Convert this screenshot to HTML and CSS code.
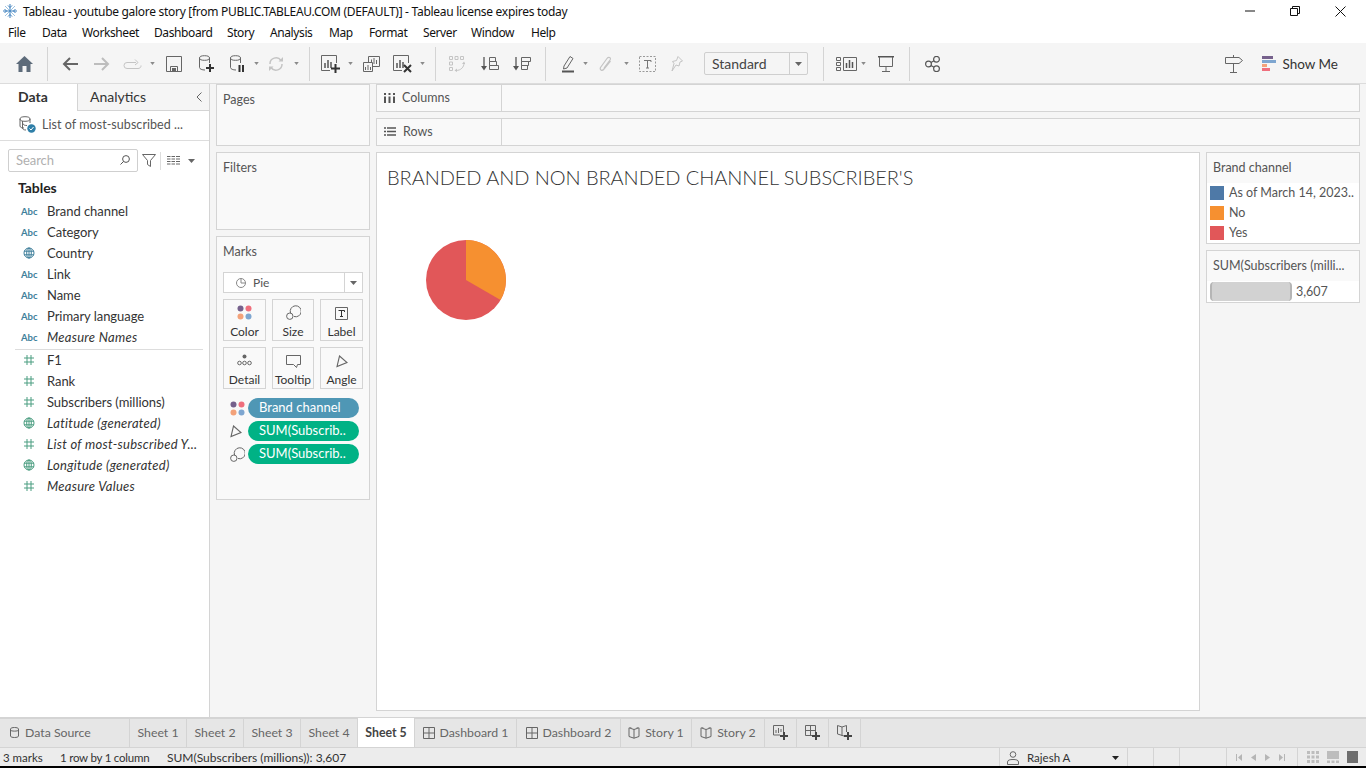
FILE: index.html
```html
<!DOCTYPE html>
<html lang="en">

<head>
    <meta charset="UTF-8">
    <title>Tableau - youtube galore story</title>
    <link rel="stylesheet" href="styles.css">
</head>

<body>
    <svg class="defs" width="0" height="0">
        <symbol id="caret" viewBox="0 0 6 4"><path d="M0 0H6L3 4Z" fill="#8a8a8a"/></symbol>
        <symbol id="caret-mid" viewBox="0 0 7 4"><path d="M0 0H7L3.5 4Z" fill="#666"/></symbol>
        <symbol id="caret-dark" viewBox="0 0 7 4"><path d="M0 0H7L3.5 4Z" fill="#222"/></symbol>
        <symbol id="globe" viewBox="0 0 12 12"><g fill="none" stroke-width="1"><circle cx="6" cy="6" r="5"/><ellipse cx="6" cy="6" rx="2.3" ry="5"/><path d="M1 4.2H11M1 7.8H11M6 1V11"/></g></symbol>
        <symbol id="hash" viewBox="0 0 10 10"><path d="M3 0V10M7 0V10M0 3H10M0 7H10" stroke="#4a9d80" stroke-width="1" fill="none"/></symbol>
        <symbol id="dots" viewBox="0 0 15 15"><circle cx="3.5" cy="3.5" r="3" fill="#76618c"/><circle cx="11.5" cy="3.5" r="3" fill="#ef6f7d"/><circle cx="3.5" cy="11.5" r="3" fill="#f3a27a"/><circle cx="11.5" cy="11.5" r="3" fill="#7ea6d0"/></symbol>
        <symbol id="size" viewBox="0 0 15 15"><g fill="none" stroke="#666" stroke-width="1"><path d="M4.5 8A5.5 5.5 0 1 1 8 11.5"/><circle cx="3.8" cy="11.2" r="3.2"/></g></symbol>
        <symbol id="angle" viewBox="0 0 12 13"><path d="M3.5 1L11 7.5L1 11.5Z" fill="none" stroke="#666" stroke-width="1.1"/></symbol>
        <symbol id="grid-sq" viewBox="0 0 12 12"><path d="M.5.5H11.5V11.5H.5ZM6 .5V11.5M.5 6H11.5" fill="none" stroke="#666"/></symbol>
        <symbol id="book" viewBox="0 0 12 12"><path d="M6 2.5L1 .8V9.5L6 11.2L11 9.5V.8ZM6 2.5V11.2M2.8.8V0M9.2.8V0" fill="none" stroke="#666"/></symbol>
    </svg>

    <div class="app">
        <div class="titlebar">
            <svg class="logo" width="14" height="14" viewBox="0 0 14 14">
                <g stroke-width="1" fill="none">
                    <path d="M2 2L12 12M12 2L2 12" stroke="#9cc3e2"/>
                    <path d="M7 0V14M0 7H14" stroke="#3a7ebd"/>
                    <path d="M5 1.5L7 3.500L9 1.500M5 12.500L7 10.500L9 12.500M1.500 5L3.500 7L1.500 9M12.500 5L10.500 7L12.500 9" stroke="#3a7ebd"/>
                </g>
            </svg>
            <span class="title-text">Tableau - youtube galore story [from PUBLIC.TABLEAU.COM (DEFAULT)] - Tableau license expires today</span>
            <div class="win-controls">
                <svg width="10" height="10" viewBox="0 0 10 10"><path d="M0 5H10" stroke="#111"/></svg>
                <svg width="10" height="10" viewBox="0 0 10 10"><path d="M.5 2.5H7.5V9.5H.5ZM2.5 2.5V.5H9.5V7.5H7.5" fill="none" stroke="#111"/></svg>
                <svg width="11" height="11" viewBox="0 0 11 11"><path d="M.5.5L10.5 10.5M10.5.5L.5 10.5" stroke="#111"/></svg>
            </div>
        </div>

        <div class="menubar">
            <span>File</span><span>Data</span><span>Worksheet</span><span>Dashboard</span><span>Story</span><span>Analysis</span><span>Map</span><span>Format</span><span>Server</span><span>Window</span><span>Help</span>
        </div>

        <div class="toolbar">
            <div class="tools">
                <svg width="17" height="16" viewBox="0 0 17 16"><path d="M8.5 0L17 8H14.5V16H10.5V10H6.5V16H2.5V8H0Z" fill="#5d6b7a"/></svg>
                <div class="sep"></div>
                <svg width="16" height="14" viewBox="0 0 16 14"><path d="M16 7H2M8 1L2 7L8 13" fill="none" stroke="#666" stroke-width="2"/></svg>
                <svg width="16" height="14" viewBox="0 0 16 14"><path d="M0 7H14M8 1L14 7L8 13" fill="none" stroke="#bdbdbd" stroke-width="2"/></svg>
                <svg width="19" height="10" viewBox="0 0 19 10"><path d="M13 3.5H4A2.8 2.8 0 0 0 4 9.5H15A2.8 2.8 0 0 0 18 6.5M12 .5L15 3.5L12 6" fill="none" stroke="#c4c4c4"/></svg>
                <svg class="dd" width="5" height="3"><use href="#caret"/></svg>
                <svg width="16" height="16" viewBox="0 0 16 16"><path d="M.5.5H15.5V15.5H.5ZM4.5 15.5V10.5H11.5V15.5" fill="none" stroke="#666"/><path d="M6 12H10V15H6Z" fill="#666"/></svg>
                <svg width="15" height="18" viewBox="0 0 15 18"><g fill="none" stroke="#666"><ellipse cx="5.5" cy="3" rx="5" ry="2.3"/><path d="M.5 3V12.5C.5 14 3 15 6 15M10.500 3V8"/></g><path d="M11 9V17M7 13H15" stroke="#333" stroke-width="2"/></svg>
                <svg width="15" height="18" viewBox="0 0 15 18"><g fill="none" stroke="#666"><ellipse cx="5.500" cy="3" rx="5" ry="2.3"/><path d="M.5 3V12.500C.5 14 3 15 6 15M10.500 3V8"/></g><path d="M9.500 10V17M13 10V17" stroke="#333" stroke-width="2"/></svg>
                <svg class="dd" width="5" height="3"><use href="#caret"/></svg>
                <svg width="16" height="16" viewBox="0 0 16 16"><g fill="none" stroke="#c4c4c4" stroke-width="1.5"><path d="M2 8A6 6 0 0 1 13 4.500M14 8A6 6 0 0 1 3 11.500"/></g><path d="M10.500 5.500H15V1ZM5.500 10.500H1V15Z" fill="#c4c4c4"/></svg>
                <svg class="dd" width="5" height="3"><use href="#caret"/></svg>
                <div class="sep"></div>
                <svg width="19" height="18" viewBox="0 0 19 18"><path d="M15.500 8V.5H.5V15.500H9" fill="none" stroke="#666"/><path d="M4 8V13M7 5V13M10 7V13" stroke="#555" stroke-width="1.5"/><path d="M14.500 9V18M10 13.500H19" stroke="#333" stroke-width="2"/></svg>
                <svg class="dd" width="5" height="3"><use href="#caret"/></svg>
                <svg width="17" height="16" viewBox="0 0 17 16"><g fill="none" stroke="#666"><path d="M5.500 7V.5H16.500V10.500H10"/><path d="M.5 6.500H9.500V15.500H.5Z" fill="#f5f5f5"/></g><path d="M8.500 3.500V6M11 2V8M13.500 4V8M2.500 11V14M5 9V14M7.500 11V14" stroke="#666"/></svg>
                <svg width="19" height="18" viewBox="0 0 19 18"><path d="M15.500 8V.5H.5V15.500H9" fill="none" stroke="#666"/><path d="M4 8V13M7 5V13M10 7V13" stroke="#555" stroke-width="1.5"/><path d="M11 10L18 17M18 10L11 17" stroke="#333" stroke-width="2"/></svg>
                <svg class="dd" width="5" height="3"><use href="#caret"/></svg>
                <div class="sep"></div>
                <svg width="16" height="16" viewBox="0 0 16 16"><g fill="none" stroke="#c4c4c4"><path d="M.5.5H3.500V3.500H.5ZM6 .5H9V3.500H6ZM11.500 .5H14.500V3.500H11.500ZM.5 6H3.500V9H.5ZM.5 11.500H3.500V14.500H.5ZM15 7C15 11 12 14.500 7 14.500"/></g><path d="M8 12.500V16L5.500 14.500ZM13 8H16.500L15 5.500Z" fill="#c4c4c4"/></svg>
                <svg width="18" height="14" viewBox="0 0 18 14"><path d="M3 0V12" stroke="#555" stroke-width="1.300"/><path d="M0 9L3 13.500L6 9Z" fill="#555"/><path d="M8.500 .5H14.500V4.500H8.500ZM8.500 4.500H15.500V8.500H8.500ZM8.500 8.500H17.500V12.500H8.500Z" fill="none" stroke="#666"/></svg>
                <svg width="18" height="14" viewBox="0 0 18 14"><path d="M3 0V12" stroke="#555" stroke-width="1.300"/><path d="M0 9L3 13.500L6 9Z" fill="#555"/><path d="M8.500 .5H17.500V4.500H8.500ZM8.500 4.500H15.500V8.500H8.500ZM8.500 8.500H14.500V12.500H8.500Z" fill="none" stroke="#666"/></svg>
                <div class="sep"></div>
                <svg width="12" height="18" viewBox="0 0 12 18"><path d="M2 11L8 1.500L11 3.500L5 13L1.500 14Z" fill="none" stroke="#666"/><path d="M0 16.500H12" stroke="#555" stroke-width="2"/></svg>
                <svg class="dd" width="5" height="3"><use href="#caret"/></svg>
                <svg width="13" height="16" viewBox="0 0 13 16"><path d="M11.500 5L5 13C3 15.500 .5 14 1.500 11.500L8 2.500C9.500 .5 12.500 1.500 11 4L5 12" fill="none" stroke="#c4c4c4" stroke-width="1.200"/></svg>
                <svg class="dd" width="5" height="3"><use href="#caret"/></svg>
                <svg width="17" height="16" viewBox="0 0 17 16"><path d="M.5.5H16.500V15.500H.5Z" fill="none" stroke="#999" stroke-dasharray="2 1.500"/><path d="M5 4.500H12V6M8.500 4.500V12M7 12H10" fill="none" stroke="#777"/></svg>
                <svg width="12" height="16" viewBox="0 0 12 16"><path d="M7 .5L11.500 5L9 6L8 10L5 9L1 15L3 7.500L1.500 5.500L5.500 4.500Z" fill="none" stroke="#c4c4c4"/></svg>
                <div class="style-select"><span>Standard</span><i><svg width="7" height="4"><use href="#caret-mid"/></svg></i></div>
                <div class="sep"></div>
                <svg width="21" height="14" viewBox="0 0 21 14"><g fill="none" stroke="#666"><path d="M.5.5H4.500V3.500H.5ZM.5 5.500H4.500V8.500H.5ZM.5 10.500H4.500V13.500H.5ZM7.500 .5H20.500V13.500H7.500Z"/></g><path d="M10.500 6V11M13.500 3V11M16.500 5V11" stroke="#555" stroke-width="1.500"/></svg>
                <svg class="dd" width="5" height="3"><use href="#caret"/></svg>
                <svg width="16" height="16" viewBox="0 0 16 16"><path d="M0 .75H16" stroke="#555" stroke-width="1.500"/><path d="M1.500 1V10.500H14.500V1M8 10.500V15M4 15.500H12" fill="none" stroke="#666"/></svg>
                <div class="sep"></div>
                <svg width="15" height="16" viewBox="0 0 15 16"><g fill="none" stroke="#555" stroke-width="1.200"><circle cx="3.500" cy="8" r="2.900"/><circle cx="11.500" cy="3.300" r="2.900"/><circle cx="11.500" cy="12.700" r="2.900"/><path d="M6 6.500L9 4.800M6 9.500L9 11.200"/></g></svg>
            </div>
            <div class="tools-right">
                <svg width="18" height="18" viewBox="0 0 18 18"><path d="M.5 2.500H14L17.500 5.500L14 8.500H.5ZM8.500 0V2.500M8.500 8.500V17.500M5 17.500H12" fill="none" stroke="#666"/></svg>
                <div class="show-me">
                    <svg width="14" height="15" viewBox="0 0 14 15"><path d="M0 0H11V3H0Z" fill="#76618c"/><path d="M0 4H14V7H0Z" fill="#7ea6d0"/><path d="M0 8H5V11H0Z" fill="#f3a27a"/><path d="M0 12H8V15H0Z" fill="#ef6f7d"/></svg>
                    <span>Show Me</span>
                </div>
            </div>
        </div>

        <div class="main">
            <div class="sidebar">
                <div class="side-tabs">
                    <div class="side-tab active">Data</div>
                    <div class="side-tab">Analytics
                        <svg class="collapse" width="6" height="10" viewBox="0 0 6 10"><path d="M5.500 .5L1 5L5.500 9.500" fill="none" stroke="#666"/></svg>
                    </div>
                </div>
                <div class="source-row">
                    <svg width="17" height="17" viewBox="0 0 17 17"><g fill="none" stroke="#666"><ellipse cx="6" cy="3" rx="5" ry="2.300"/><path d="M1 3V10C1 11.500 3 12 5 12M11 3V7M4 7.500C4 9 6 9.500 8 9.500M3.500 5V12C3.500 13.500 5 14 7 14"/></g><circle cx="12.500" cy="12.500" r="4.200" fill="#2f7fa8"/><path d="M10.500 12.500L12 14L14.500 11" fill="none" stroke="#fff"/></svg>
                    <span>List of most-subscribed ...</span>
                </div>
                <div class="search-row">
                    <div class="search-box">
                        <span>Search</span>
                        <svg width="10" height="10" viewBox="0 0 10 10"><circle cx="6" cy="4" r="3.400" fill="none" stroke="#555"/><path d="M3.500 6.500L.5 9.500" stroke="#555"/></svg>
                    </div>
                    <svg width="14" height="13" viewBox="0 0 14 13"><path d="M.5.5H13.500L8.500 6.500V12.500L5.500 10.500V6.500Z" fill="none" stroke="#666"/></svg>
                    <div class="search-sep"></div>
                    <svg width="13" height="9" viewBox="0 0 13 9"><path d="M0 .5H13M0 3H13M0 5.500H13M0 8H13" stroke="#666"/><path d="M4 0V9M8.500 0V9" stroke="#fff"/></svg>
                    <svg class="search-caret" width="7" height="4"><use href="#caret-mid"/></svg>
                </div>
                <div class="tables-head">Tables</div>
                <ul class="fields">
                    <li class="field"><span class="abc">Abc</span>Brand channel</li>
                    <li class="field"><span class="abc">Abc</span>Category</li>
                    <li class="field"><span class="f-icon"><svg class="globe-dim" width="12" height="12"><use href="#globe"/></svg></span>Country</li>
                    <li class="field"><span class="abc">Abc</span>Link</li>
                    <li class="field"><span class="abc">Abc</span>Name</li>
                    <li class="field"><span class="abc">Abc</span>Primary language</li>
                    <li class="field gen"><span class="abc">Abc</span>Measure Names</li>
                </ul>
                <ul class="fields measures">
                    <li class="field"><span class="f-icon"><svg width="10" height="10"><use href="#hash"/></svg></span>F1</li>
                    <li class="field"><span class="f-icon"><svg width="10" height="10"><use href="#hash"/></svg></span>Rank</li>
                    <li class="field"><span class="f-icon"><svg width="10" height="10"><use href="#hash"/></svg></span>Subscribers (millions)</li>
                    <li class="field gen"><span class="f-icon"><svg class="globe-mea" width="12" height="12"><use href="#globe"/></svg></span>Latitude (generated)</li>
                    <li class="field gen"><span class="f-icon"><svg width="10" height="10"><use href="#hash"/></svg></span>List of most-subscribed Y...</li>
                    <li class="field gen"><span class="f-icon"><svg class="globe-mea" width="12" height="12"><use href="#globe"/></svg></span>Longitude (generated)</li>
                    <li class="field gen"><span class="f-icon"><svg width="10" height="10"><use href="#hash"/></svg></span>Measure Values</li>
                </ul>
            </div>

            <div class="cards">
                <div class="card pages"><div class="card-title">Pages</div></div>
                <div class="card filters"><div class="card-title">Filters</div></div>
                <div class="card marks">
                    <div class="card-title">Marks</div>
                    <div class="mark-type">
                        <svg width="10" height="10" viewBox="0 0 10 10"><circle cx="5" cy="5" r="4.500" fill="none" stroke="#888"/><path d="M5 1V5H9" fill="none" stroke="#888"/></svg>
                        <span>Pie</span>
                        <i><svg width="7" height="4"><use href="#caret-mid"/></svg></i>
                    </div>
                    <div class="mark-btns">
                        <div class="mark-btn"><svg width="15" height="15"><use href="#dots"/></svg><span>Color</span></div>
                        <div class="mark-btn"><svg width="15" height="15"><use href="#size"/></svg><span>Size</span></div>
                        <div class="mark-btn"><svg width="13" height="13" viewBox="0 0 13 13"><path d="M.5.5H12.500V12.500H.5Z" fill="none" stroke="#666"/><path d="M3.500 3.500H9.500V5M6.500 3.500V9.500M5 9.500H8" fill="none" stroke="#333"/></svg><span>Label</span></div>
                        <div class="mark-btn"><svg width="15" height="15" viewBox="0 0 15 15"><circle cx="7.500" cy="3.500" r="2" fill="#666"/><g fill="none" stroke="#666"><circle cx="2.500" cy="10" r="1.800"/><circle cx="7.500" cy="10" r="1.800"/><circle cx="12.500" cy="10" r="1.800"/></g></svg><span>Detail</span></div>
                        <div class="mark-btn"><svg width="15" height="13" viewBox="0 0 15 13"><path d="M.5.5H14.500V9.500H11.500L10.500 12.500L7.500 9.500H.5Z" fill="none" stroke="#666"/></svg><span>Tooltip</span></div>
                        <div class="mark-btn"><svg width="12" height="13"><use href="#angle"/></svg><span>Angle</span></div>
                    </div>
                    <div class="pill-row">
                        <svg width="15" height="15"><use href="#dots"/></svg>
                        <div class="pill dim">Brand channel</div>
                    </div>
                    <div class="pill-row">
                        <svg width="12" height="13"><use href="#angle"/></svg>
                        <div class="pill mea">SUM(Subscrib..</div>
                    </div>
                    <div class="pill-row">
                        <svg width="15" height="15"><use href="#size"/></svg>
                        <div class="pill mea">SUM(Subscrib..</div>
                    </div>
                </div>
            </div>

            <div class="work">
                <div class="shelf">
                    <div class="shelf-label"><svg width="11" height="10" viewBox="0 0 11 10"><path d="M1 0V2M5.500 0V2M10 0V2M1 3.500V10M5.500 3.500V10M10 3.500V10" stroke="#555" stroke-width="2"/></svg><span>Columns</span></div>
                </div>
                <div class="shelf">
                    <div class="shelf-label"><svg width="12" height="9" viewBox="0 0 12 9"><path d="M0 1H2M3 1H12M0 4.500H2M3 4.500H12M0 8H2M3 8H12" stroke="#555" stroke-width="1.600"/></svg><span>Rows</span></div>
                </div>
                <div class="work-row">
                    <div class="view">
                        <h1 class="view-title">BRANDED AND NON BRANDED CHANNEL SUBSCRIBER'S</h1>
                        <svg class="pie" width="80" height="80" viewBox="0 0 80 80">
                            <circle cx="40" cy="40" r="40" fill="#e15759"/>
                            <path d="M40 40V0A40 40 0 0 1 74.600 60Z" fill="#f69030"/>
                        </svg>
                    </div>
                    <div class="legends">
                        <div class="legend">
                            <div class="legend-title">Brand channel</div>
                            <div class="legend-body">
                                <div class="legend-item"><i class="swatch blue"></i>As of March 14, 2023..</div>
                                <div class="legend-item"><i class="swatch orange"></i>No</div>
                                <div class="legend-item"><i class="swatch red"></i>Yes</div>
                            </div>
                        </div>
                        <div class="legend">
                            <div class="legend-title short">SUM(Subscribers (milli...</div>
                            <div class="legend-size"><i class="size-bar"></i>3,607</div>
                        </div>
                    </div>
                </div>
            </div>
        </div>

        <div class="tabbar">
            <div class="tab source"><svg width="9" height="11" viewBox="0 0 9 11"><path d="M.5 2V9C.5 11 8.500 11 8.500 9V2C8.500 0 .5 0 .5 2ZM.5 3C.5 4.500 8.500 4.500 8.500 3" fill="none" stroke="#666"/></svg>Data Source</div>
            <div class="tab sheet">Sheet 1</div>
            <div class="tab sheet">Sheet 2</div>
            <div class="tab sheet">Sheet 3</div>
            <div class="tab sheet">Sheet 4</div>
            <div class="tab sheet current">Sheet 5</div>
            <div class="tab dash1"><svg width="12" height="12"><use href="#grid-sq"/></svg>Dashboard 1</div>
            <div class="tab dash2"><svg width="12" height="12"><use href="#grid-sq"/></svg>Dashboard 2</div>
            <div class="tab story1"><svg width="12" height="12"><use href="#book"/></svg>Story 1</div>
            <div class="tab story2"><svg width="12" height="12"><use href="#book"/></svg>Story 2</div>
            <div class="tab new-tab"><svg width="15" height="15" viewBox="0 0 15 15"><path d="M7 10H.5V.5H10.500V7" fill="none" stroke="#666"/><path d="M3 5V8M5.500 3V8M8 4V7" stroke="#666"/><path d="M11 7V15M7 11H15" stroke="#444" stroke-width="2"/></svg></div>
            <div class="tab new-tab"><svg width="15" height="15" viewBox="0 0 15 15"><path d="M7 10.500H.5V.5H10.500V7M5.500 .5V10.500M.5 5.500H10.500" fill="none" stroke="#666"/><path d="M11 7V15M7 11H15" stroke="#444" stroke-width="2"/></svg></div>
            <div class="tab new-tab"><svg width="15" height="15" viewBox="0 0 15 15"><path d="M7 11L.5 9V.5L5 2L9.500 .5V7M5 2V11" fill="none" stroke="#666"/><path d="M11 7V15M7 11H15" stroke="#444" stroke-width="2"/></svg></div>
        </div>

        <div class="statusbar">
            <span class="st-marks">3 marks</span>
            <span class="st-rows">1 row by 1 column</span>
            <span class="st-sum">SUM(Subscribers (millions)): 3,607</span>
            <div class="st-user">
                <svg width="12" height="14" viewBox="0 0 12 14"><circle cx="6" cy="3.500" r="2.800" fill="none" stroke="#666"/><path d="M.5 13.500V11C.5 9 3 8.500 6 8.500S11.500 9 11.500 11V13.500Z" fill="none" stroke="#666"/></svg>
                <span>Rajesh A</span>
                <svg class="user-caret" width="7" height="4"><use href="#caret-dark"/></svg>
            </div>
            <div class="st-cell"></div>
            <div class="st-cell"></div>
            <div class="st-cell wide"></div>
            <div class="st-nav">
                <svg width="6" height="7" viewBox="0 0 6 7"><path d="M0 0H1V7H0ZM6 0V7L2 3.500Z" fill="#b5b5b5"/></svg>
                <svg width="5" height="7" viewBox="0 0 5 7"><path d="M5 0V7L0 3.500Z" fill="#b5b5b5"/></svg>
                <svg width="5" height="7" viewBox="0 0 5 7"><path d="M0 0V7L5 3.500Z" fill="#b5b5b5"/></svg>
                <svg width="6" height="7" viewBox="0 0 6 7"><path d="M5 0H6V7H5ZM0 0V7L4 3.500Z" fill="#b5b5b5"/></svg>
            </div>
            <div class="st-views">
                <svg width="12" height="12" viewBox="0 0 12 12"><path d="M0 0H3V3H0ZM4.500 0H7.500V3H4.500ZM9 0H12V3H9ZM0 4.500H3V7.500H0ZM4.500 4.500H7.500V7.500H4.500ZM9 4.500H12V7.500H9ZM0 9H3V12H0ZM4.500 9H7.500V12H4.500ZM9 9H12V12H9Z" fill="#bdbdbd"/></svg>
                <svg width="12" height="12" viewBox="0 0 12 12"><path d="M0 0H12V8H0ZM0 9.500H3V12H0ZM4.500 9.500H7.500V12H4.500ZM9 9.500H12V12H9Z" fill="#bdbdbd"/></svg>
                <svg width="11" height="12" viewBox="0 0 11 12"><path d="M0 0H11V12H0Z" fill="#6e6e6e"/></svg>
            </div>
        </div>
        <div class="taskbar-edge"></div>
    </div>
</body>

</html>
```

FILE: styles.css
```css
:root {
    --bg: #f5f5f5;
    --card: #f9f9f9;
    --line: #d4d4d4;
    --text: #333333;
    --muted: #555555;
    --bar: #e6e6e6;
}

* {
    box-sizing: border-box;
}

body {
    margin: 0;
    height: 768px;
    overflow: hidden;
    font-family: Lato, "Open Sans", sans-serif;
    font-size: 13px;
    color: var(--text);
    background-color: var(--bg);
}

.defs {
    position: absolute;
}

svg {
    display: block;
    flex: none;
}

i {
    font-style: normal;
}

.app {
    display: flex;
    flex-direction: column;
    height: 768px;
}

/* window chrome */
.titlebar {
    display: flex;
    flex: none;
    align-items: center;
    height: 22px;
    padding-left: 3px;
    background: #fff;
    font-family: "Noto Sans", sans-serif;
    font-size: 12px;
    color: #111;
}

.title-text {
    margin-left: 6px;
    letter-spacing: -0.29px;
}

.win-controls {
    display: flex;
    align-items: center;
    gap: 35px;
    margin-left: auto;
    margin-right: 20px;
}

.menubar {
    display: grid;
    flex: none;
    grid-template-columns: 34px 40px 72px 73px 43px 59px 40px 54px 48px 60px auto;
    justify-content: start;
    align-items: center;
    height: 21px;
    padding-left: 8px;
    background: #fff;
    font-family: "Noto Sans", sans-serif;
    font-size: 12px;
    letter-spacing: -0.4px;
    color: #111;
}

/* toolbar, columns are the distances between icon left edges */
.toolbar {
    display: flex;
    flex: none;
    align-items: center;
    height: 41px;
    padding: 1px 28px 0 16px;
    background: var(--bg);
    border-bottom: 1px solid #dcdcdc;
}

.tools {
    display: grid;
    grid-template-columns:
        31px 15px 32px 29px 27px 16px 33px 31px 24px 14px 26px 15px 12px 27px 15px 30px
        27px 15px 14px 32px 32px 32px 17px 21px 16px 25px 15px 32px 33px 119px 13px 25px
        17px 31px 16px auto;
    align-items: center;
    justify-items: start;
}

.sep {
    width: 1px;
    height: 34px;
    background: #d4d4d4;
}

.style-select {
    display: flex;
    align-items: center;
    width: 104px;
    height: 23px;
    border: 1px solid #cfcfcf;
    border-radius: 2px;
    font-size: 14px;
    color: #444;
}

.style-select span {
    flex: 1;
    padding: 0 0 1px 7px;
}

.style-select i {
    display: flex;
    align-items: center;
    justify-content: center;
    width: 18px;
    height: 100%;
    border-left: 1px solid #cfcfcf;
}

.tools-right {
    display: flex;
    align-items: center;
    gap: 19px;
    margin-left: auto;
}

.show-me {
    display: flex;
    align-items: center;
    gap: 6px;
    font-size: 13.500px;
}

/* main area */
.main {
    display: flex;
    flex: 1;
    min-height: 0;
}

.sidebar {
    flex: none;
    width: 210px;
    background: #fff;
    border-right: 1px solid var(--line);
    letter-spacing: -0.05px;
}

.side-tabs {
    display: flex;
    height: 27px;
    letter-spacing: 0;
}

.side-tab {
    display: flex;
    align-items: center;
    flex: 1;
    position: relative;
    padding: 0 0 2px 12px;
    font-size: 14px;
    background: var(--bg);
    border: 1px solid var(--line);
    border-top: 0;
    border-right: 0;
}

.side-tab.active {
    flex: none;
    width: 77px;
    padding-left: 18px;
    font-weight: 700;
    background: #fff;
    border: 0;
}

.collapse {
    position: absolute;
    right: 7px;
    top: 8px;
}

.source-row {
    display: flex;
    align-items: center;
    gap: 6px;
    height: 30px;
    padding: 0 0 2px 19px;
    font-size: 12.500px;
    letter-spacing: 0.05px;
    color: var(--muted);
    border-bottom: 1px solid #dddddd;
}

.search-row {
    display: flex;
    align-items: center;
    height: 23px;
    margin-top: 8px;
    padding-left: 8px;
}

.search-box {
    display: flex;
    align-items: center;
    justify-content: space-between;
    width: 130px;
    height: 23px;
    padding: 0 7px 1px;
    border: 1px solid #cfcfcf;
    border-radius: 2px;
    color: #b0b0b0;
}

.search-row > svg:nth-of-type(1) {
    margin-left: 4px;
}

.search-sep {
    width: 1px;
    height: 18px;
    margin: 0 6px 0 4px;
    background: #dddddd;
}

.search-caret {
    margin-left: 8px;
}

.tables-head {
    margin-top: 7px;
    padding-left: 18px;
    font-size: 14px;
    font-weight: 700;
    line-height: 17px;
    color: #222;
}

.fields {
    margin: 5px 0 0;
    padding: 0;
    list-style: none;
}

.measures {
    width: 188px;
    margin: 1px 0 0 15px;
    padding-top: 0;
    border-top: 1px solid #dddddd;
}

.measures .field {
    margin-left: -15px;
    width: 203px;
}

.field {
    display: flex;
    align-items: center;
    height: 21px;
    padding-bottom: 1px;
    white-space: nowrap;
}

.gen {
    font-style: italic;
    letter-spacing: 0.28px;
}

.abc {
    width: 47px;
    padding-left: 21px;
    font-size: 9.500px;
    font-style: normal;
    font-weight: 700;
    letter-spacing: 0;
    color: #3f7f9b;
}

.f-icon {
    display: flex;
    justify-content: center;
    flex: none;
    width: 47px;
    padding-left: 11px;
}

.globe-dim {
    stroke: #3f7f9b;
}

.globe-mea {
    stroke: #4a9d80;
}

/* pages, filters, marks */
.cards {
    display: flex;
    flex: none;
    flex-direction: column;
    gap: 6px;
    width: 154px;
    margin-left: 6px;
}

.card {
    flex: none;
    padding: 7px 6px 0;
    background: var(--card);
    border: 1px solid var(--line);
}

.pages {
    height: 62px;
}

.filters {
    height: 78px;
}

.marks {
    height: 264px;
}

.card-title {
    font-size: 12.500px;
    color: var(--muted);
}

.mark-type {
    display: flex;
    align-items: center;
    gap: 7px;
    height: 21px;
    margin-top: 13px;
    padding-left: 12px;
    font-size: 12px;
    color: var(--muted);
    background: #fff;
    border: 1px solid var(--line);
}

.mark-type span {
    flex: 1;
}

.mark-type i {
    display: flex;
    align-items: center;
    justify-content: center;
    width: 18px;
    height: 100%;
    border-left: 1px solid var(--line);
}

.mark-btns {
    display: grid;
    grid-template-columns: 43px 42px 43px;
    grid-auto-rows: 42px;
    gap: 6px;
    margin-top: 6px;
}

.mark-btn {
    display: flex;
    flex-direction: column;
    align-items: center;
    justify-content: flex-end;
    gap: 4px;
    padding-bottom: 1px;
    font-size: 12px;
    border: 1px solid var(--line);
}

.pill-row {
    display: flex;
    align-items: center;
    height: 20px;
    margin-top: 3px;
    padding: 0 4px 0 7px;
}

.mark-btns + .pill-row {
    margin-top: 9px;
}

.pill-row svg {
    margin-right: auto;
}

.pill {
    width: 111px;
    height: 20px;
    padding-left: 11px;
    border-radius: 10px;
    font-size: 13px;
    line-height: 19px;
    color: #fff;
}

.pill.dim {
    background: #4f97b5;
}

.pill.mea {
    background: #00b285;
}

/* columns, rows and the view */
.work {
    display: flex;
    flex-direction: column;
    flex: 1;
    gap: 6px;
    min-width: 0;
    margin: 0 6px 6px;
}

.shelf {
    height: 28px;
    flex: none;
    background: var(--card);
    border: 1px solid var(--line);
}

.shelf-label {
    display: flex;
    align-items: center;
    gap: 7px;
    width: 125px;
    height: 100%;
    padding: 0 0 1px 7px;
    font-size: 12.500px;
    color: var(--muted);
    border-right: 1px solid var(--line);
}

.work-row {
    display: flex;
    flex: 1;
    gap: 6px;
    min-height: 0;
}

.view {
    flex: 1;
    padding: 12px 10px;
    background: #fff;
    border: 1px solid var(--line);
}

.view-title {
    margin: 0;
    font-size: 20px;
    font-weight: 300;
    line-height: 24px;
    letter-spacing: -0.07px;
    color: #333;
}

.pie {
    margin: 51px 0 0 39px;
}

.legends {
    display: flex;
    flex-direction: column;
    gap: 6px;
    width: 154px;
}

.legend {
    border: 1px solid var(--line);
}

.legend-title {
    height: 30px;
    padding: 7px 6px 0;
    font-size: 12.500px;
    color: var(--muted);
    background: var(--card);
}

.legend-title.short {
    white-space: nowrap;
}

.legend-body {
    height: 60px;
    background: #fff;
}

.legend-item {
    display: flex;
    align-items: center;
    gap: 5px;
    height: 20px;
    padding: 0 0 1px 3px;
    font-size: 12.500px;
    color: var(--muted);
    white-space: nowrap;
}

.swatch {
    flex: none;
    width: 14px;
    height: 14px;
}

.swatch.blue {
    background: #4e79a7;
}

.swatch.orange {
    background: #f69030;
}

.swatch.red {
    background: #e15759;
}

.legend-size {
    display: flex;
    align-items: center;
    gap: 4px;
    height: 21px;
    padding-left: 3px;
    font-size: 12.500px;
    color: var(--muted);
    background: #fff;
}

.size-bar {
    width: 82px;
    height: 19px;
    background: #d2d2d2;
    border-left: 2px solid #b5b5b5;
    border-right: 2px solid #b5b5b5;
    border-radius: 4px;
}

/* sheet tabs */
.tabbar {
    display: flex;
    height: 31px;
    flex: none;
    background: var(--bar);
    border-top: 2px solid var(--line);
    border-bottom: 1px solid var(--line);
}

.tab {
    display: flex;
    align-items: center;
    justify-content: center;
    gap: 5px;
    padding-bottom: 1px;
    font-size: 12.300px;
    color: #666;
    border-right: 1px solid var(--line);
}

.tab.source {
    justify-content: flex-start;
    gap: 6px;
    width: 130px;
    padding-left: 10px;
}

.tab.sheet {
    width: 57px;
}

.tab.current {
    margin-top: -1px;
    font-weight: 700;
    color: #444;
    background: #fff;
}

.tab.dash1 {
    width: 102px;
}

.tab.dash2 {
    width: 104px;
}

.tab.story1 {
    width: 71px;
}

.tab.story2 {
    width: 73px;
}

.tab.new-tab {
    width: 32px;
}

/* status */
.statusbar {
    display: flex;
    align-items: stretch;
    height: 18px;
    flex: none;
    font-size: 11.500px;
    line-height: 20px;
    background: #ececec;
}

.st-marks {
    width: 60px;
    padding-left: 3px;
}

.st-rows {
    width: 107px;
    letter-spacing: -0.22px;
}

.st-sum {
    width: 832px;
    font-size: 12px;
}

.st-user {
    display: flex;
    align-items: center;
    gap: 8px;
    width: 128px;
    padding: 1px 0 0 7px;
    border-left: 1px solid var(--line);
}

.user-caret {
    margin-left: auto;
    margin-right: 8px;
}

.st-cell {
    width: 26px;
    border-left: 1px solid var(--line);
}

.st-cell.wide {
    width: 47px;
}

.st-nav {
    display: flex;
    align-items: center;
    gap: 9px;
    width: 71px;
    padding-left: 9px;
    border-left: 1px solid var(--line);
}

.st-views {
    display: flex;
    align-items: center;
    gap: 8px;
    padding-left: 9px;
    border-left: 1px solid var(--line);
}

.taskbar-edge {
    flex: none;
    height: 2px;
    background: #000;
}
```
